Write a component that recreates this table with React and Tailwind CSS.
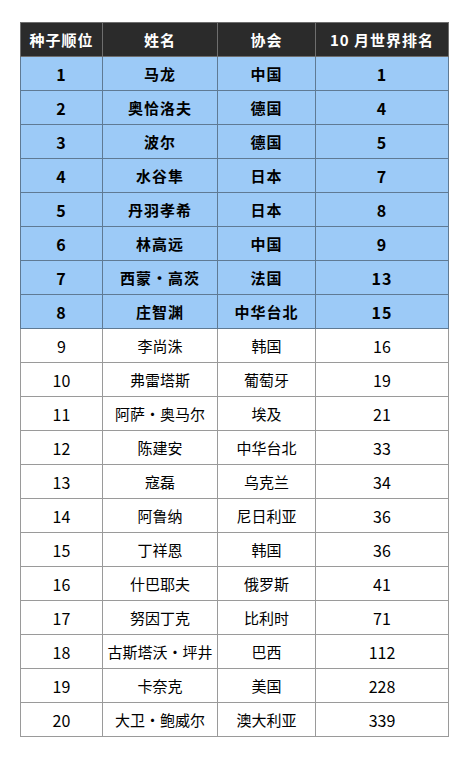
import React from "react";

const rows = [
  ["1", "马龙", "中国", "1"],
  ["2", "奥恰洛夫", "德国", "4"],
  ["3", "波尔", "德国", "5"],
  ["4", "水谷隼", "日本", "7"],
  ["5", "丹羽孝希", "日本", "8"],
  ["6", "林高远", "中国", "9"],
  ["7", "西蒙・高茨", "法国", "13"],
  ["8", "庄智渊", "中华台北", "15"],
  ["9", "李尚洙", "韩国", "16"],
  ["10", "弗雷塔斯", "葡萄牙", "19"],
  ["11", "阿萨・奥马尔", "埃及", "21"],
  ["12", "陈建安", "中华台北", "33"],
  ["13", "寇磊", "乌克兰", "34"],
  ["14", "阿鲁纳", "尼日利亚", "36"],
  ["15", "丁祥恩", "韩国", "36"],
  ["16", "什巴耶夫", "俄罗斯", "41"],
  ["17", "努因丁克", "比利时", "71"],
  ["18", "古斯塔沃・坪井", "巴西", "112"],
  ["19", "卡奈克", "美国", "228"],
  ["20", "大卫・鲍威尔", "澳大利亚", "339"],
];

const isNum = (s) => /^\d+$/.test(s);

export default function App() {
  return (
    <div
      className="bg-white w-[467px] h-[761px] pt-[22px] pl-[20px]"
      style={{ fontFamily: '"Noto Sans CJK SC", sans-serif' }}
    >
      <table className="table-fixed border-collapse w-[428px] text-[15px] text-black">
        <colgroup>
          <col className="w-[82px]" />
          <col className="w-[115px]" />
          <col className="w-[98px]" />
          <col className="w-[133px]" />
        </colgroup>
        <thead>
          <tr className="h-[34px] bg-[#2b2b2b] text-white font-bold">
            {["种子顺位", "姓名", "协会", "10 月世界排名"].map((h) => (
              <th
                key={h}
                className="border border-[#6e6e6e] p-0 text-center font-bold tracking-[1px] leading-none"
              >
                {h}
              </th>
            ))}
          </tr>
        </thead>
        <tbody>
          {rows.map((r, i) => {
            const top = i < 8;
            return (
              <tr
                key={r[0]}
                className={
                  top
                    ? "h-[34px] bg-[#9ccaf7] font-bold"
                    : "h-[34px] bg-white font-normal"
                }
              >
                {r.map((c, j) => (
                  <td
                    key={j}
                    className={
                      (top
                        ? "border border-[#5f7a94] p-0 text-center tracking-[1px] leading-none"
                        : "border border-[#9a9a9a] p-0 text-center leading-none") +
                      (isNum(c) ? " text-[16px]" : "")
                    }
                  >
                    {c}
                  </td>
                ))}
              </tr>
            );
          })}
        </tbody>
      </table>
    </div>
  );
}
